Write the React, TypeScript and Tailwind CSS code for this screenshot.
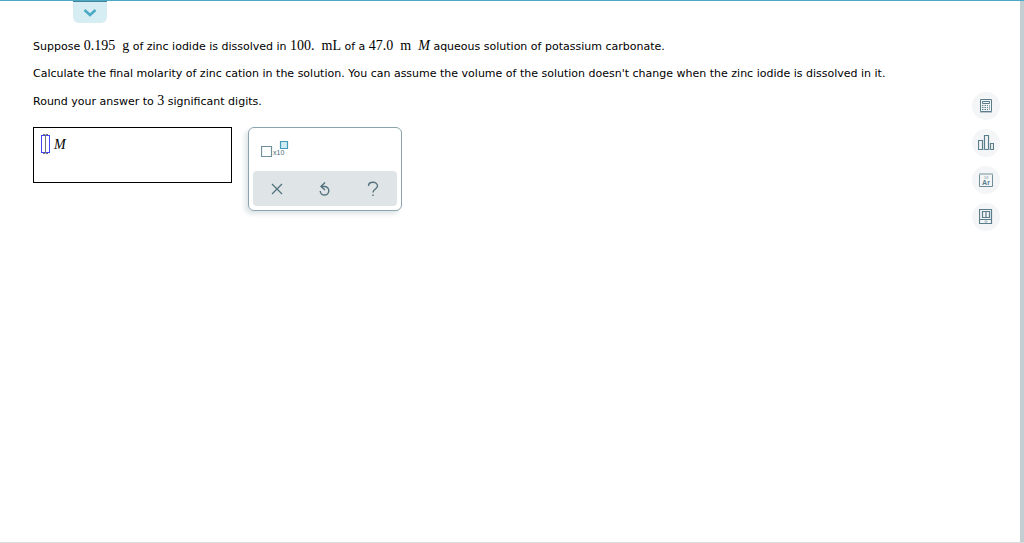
import type { ReactNode } from 'react';

function Quantity({ children }: { children: ReactNode }) {
  return <span className="font-['Liberation_Serif',serif] text-[14px]">{children}</span>;
}

function ToolButton({ label, children }: { label: string; children: ReactNode }) {
  return (
    <button
      type="button"
      aria-label={label}
      className="flex size-7 items-center justify-center rounded-full bg-[#f3f5f7] text-[#5a7d8c]"
    >
      {children}
    </button>
  );
}

function CalculatorIcon() {
  return (
    <svg width="14" height="16" viewBox="0 0 14 16" fill="none" aria-hidden="true">
      <path d="M1.5 1.5h11v12h-11z" stroke="currentColor" />
      <path d="M1 14.5h12" stroke="#b9c8cd" />
      <path d="M3.5 3.5h7v2h-7z" stroke="currentColor" />
      <path d="M3 7.5h6M3 9.5h6M3 11.5h6" stroke="currentColor" strokeDasharray="1.5 1" />
      <path d="M10.5 7v5" stroke="#9fb2b9" />
    </svg>
  );
}

function ChartIcon() {
  return (
    <svg width="16" height="16" viewBox="0 0 16 16" fill="none" stroke="currentColor" aria-hidden="true">
      <path d="M.5 5.5h4v9h-4zM6.5 .5h4v14h-4zM12.5 8.5h3v6h-3z" strokeWidth="1.2" />
      <path d="M4.5 14.5h2M10.5 14.5h2" stroke="#9fb2b9" />
    </svg>
  );
}

function ElementIcon() {
  return (
    <svg width="14" height="14" viewBox="0 0 14 14" fill="none" aria-hidden="true">
      <path d="M.5 1v12.5h13V1" stroke="#6f8d99" />
      <path d="M0 1h14" stroke="#b3c3c9" strokeWidth="2" />
      <text x="7" y="6" textAnchor="middle" fontSize="4" fontFamily="Liberation Sans, sans-serif" fill="#829ca7">18</text>
      <text x="7" y="12" textAnchor="middle" fontSize="7" fontWeight="700" fontFamily="Liberation Sans, sans-serif" fill="currentColor">Ar</text>
    </svg>
  );
}

function ReferenceIcon() {
  return (
    <svg width="14" height="16" viewBox="0 0 14 16" fill="none" stroke="currentColor" aria-hidden="true">
      <path d="M.5 .5h12v14h-12zM.5 10.5h12M3.5 2.5h7v6h-7zM7 2v7" strokeWidth="1.2" />
      <path d="M7 11.5l1 1-1 1-1-1z" strokeWidth=".7" />
    </svg>
  );
}

export default function App() {
  return (
    <div className="flex min-h-screen border-t border-b border-t-[#4ba9c5] border-b-[#d5dddd] bg-white font-['DejaVu_Sans',Verdana,sans-serif] text-[11px] text-black">
      <main className="min-w-0 flex-1 pl-8">
        <button
          type="button"
          aria-label="Expand header"
          className="ml-[41px] flex h-[22px] w-[34px] items-center justify-center rounded-b-md border-t border-t-[#478398] bg-[#d5edf3] text-[#4ba9c5]"
        >
          <svg width="14" height="10" viewBox="0 0 14 10" fill="none" stroke="currentColor" strokeWidth="2.5" aria-hidden="true">
            <path d="M1.5 2L7 7l5.5-5" />
          </svg>
        </button>
        <div className="mt-[13px] flex flex-col gap-[7px] leading-5 pl-px">
          <p>
            Suppose <Quantity>0.195&nbsp; g</Quantity> of zinc iodide is dissolved in <Quantity>100.&nbsp; mL</Quantity> of a{' '}
            <Quantity>47.0&nbsp; m&nbsp; <i>M</i></Quantity> aqueous solution of potassium carbonate.
          </p>
          <p>
            Calculate the final molarity of zinc cation in the solution. You can assume the volume of the solution doesn't
            change when the zinc iodide is dissolved in it.
          </p>
          <p>
            Round your answer to <Quantity>3</Quantity> significant digits.
          </p>
        </div>
        <div className="mt-[15px] flex items-start gap-4 pl-px">
          <label className="flex h-14 w-[199px] items-start gap-1 border border-black pt-[7px] pl-[7px]">
            <span className="relative flex">
              <input aria-label="Molarity of zinc cation" className="h-[18px] w-[9px] border border-[#4545f5] outline-none" />
              <svg className="pointer-events-none absolute -top-px left-0" width="9" height="20" viewBox="0 0 9 20" fill="none" stroke="#777" aria-hidden="true">
                <path d="M4.5 1v18M2 .5h2l.5.5.5-.5h2M2 19.5h2l.5-.5.5.5h2" />
              </svg>
            </span>
            <i className="font-['Liberation_Serif',serif] text-[14px] leading-5">M</i>
          </label>
          <section aria-label="Answer tools" className="w-[154px] rounded-md border border-[#8ba4ae] p-1 shadow-[-3px_3px_5px_#dde5e7]">
            <button type="button" aria-label="Scientific notation" className="flex h-[39px] items-start pt-2 pl-2">
              <svg width="28" height="18" viewBox="0 0 28 18" fill="none" aria-hidden="true">
                <path d="M.5 6.5h10v10H.5z" stroke="#718f9b" strokeWidth="1.2" />
                <path d="M19.5 1.5h7v7h-7z" fill="#cfecf4" stroke="#459bb6" strokeWidth="1.2" />
                <text x="12" y="15" fontSize="7" fontFamily="Liberation Sans, sans-serif" fill="#4d6975">x10</text>
              </svg>
            </button>
            <div className="grid h-[35px] grid-cols-3 rounded-sm bg-[#dfe5e7] text-[#54717e]">
              <button type="button" aria-label="Clear" className="flex items-center justify-center">
                <svg width="12" height="12" viewBox="0 0 12 12" fill="none" stroke="currentColor" strokeWidth="1.3" aria-hidden="true">
                  <path d="M1 1l10 10M11 1L1 11" />
                </svg>
              </button>
              <button type="button" aria-label="Reset" className="flex items-center justify-center">
                <svg width="12" height="14" viewBox="0 0 12 14" fill="none" stroke="currentColor" strokeWidth="1.4" aria-hidden="true">
                  <path d="M6 .5L2 4.5l4 3.5M2.3 4.5H6a4.3 4.3 0 1 1-4.8 4.5" />
                </svg>
              </button>
              <button type="button" aria-label="Help" className="flex items-center justify-center">
                <svg width="12" height="16" viewBox="0 0 12 16" fill="none" stroke="currentColor" strokeWidth="1.4" aria-hidden="true">
                  <path d="M1.5 5c0-5 9-5 9 0 0 3-4.5 3-4.5 6.5M6 13.5V15" />
                </svg>
              </button>
            </div>
          </section>
        </div>
      </main>
      <aside aria-label="Reference tools" className="flex flex-col gap-[9px] border-r-4 border-[#c2ced2] pt-[91px] pr-5">
        <ToolButton label="Calculator"><CalculatorIcon /></ToolButton>
        <ToolButton label="Data chart"><ChartIcon /></ToolButton>
        <ToolButton label="Periodic table"><ElementIcon /></ToolButton>
        <ToolButton label="Reference book"><ReferenceIcon /></ToolButton>
      </aside>
    </div>
  );
}
